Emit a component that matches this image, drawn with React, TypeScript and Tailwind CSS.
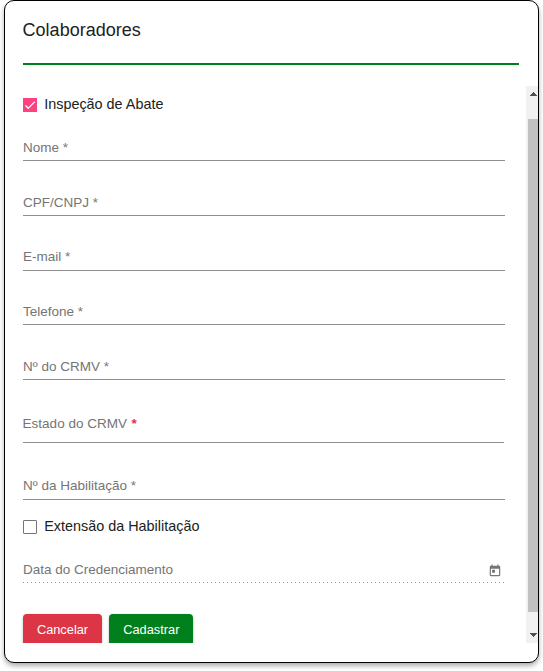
import { useState } from 'react'

interface Field {
  id: string
  label: string
  className: string
}

const fields: Field[] = [
  { id: 'nome', label: 'Nome *', className: 'h-[45px] pb-0.5' },
  { id: 'documento', label: 'CPF/CNPJ *', className: 'h-[55px] pb-0.5' },
  { id: 'email', label: 'E-mail *', className: 'h-[55px] pb-[3px]' },
  { id: 'telefone', label: 'Telefone *', className: 'h-[54px] pb-0.5' },
  { id: 'crmv', label: 'Nº do CRMV *', className: 'h-[55px] pb-0.5' },
]

function TextField({ field }: { field: Field }) {
  return (
    <div className={`flex items-end border-b border-[#8f8f8f] ${field.className}`}>
      <label className="text-[13.5px] leading-5 text-[#757575]">{field.label}</label>
    </div>
  )
}

interface CheckboxProps {
  label: string
  checked: boolean
  onChange: () => void
}

function Checkbox({ label, checked, onChange }: CheckboxProps) {
  return (
    <button type="button" role="checkbox" aria-checked={checked} onClick={onChange} className="flex h-5 items-center gap-[7.2px]">
      {checked ? (
        <span className="mt-0.5 block size-3.5 bg-[#ff4081]">
          <svg viewBox="0 0 24 24" className="size-3.5" fill="none" stroke="#fff" strokeWidth="2.1">
            <path d="M4.1 12.7 9 17.6 20.3 6.3" />
          </svg>
        </span>
      ) : (
        <span className="mt-0.5 block size-3.5 rounded-[1px] border border-[#757575]" />
      )}
      <span className="text-[14.4px] leading-5 text-[#212121]">{label}</span>
    </button>
  )
}

export default function App() {
  const [inspecao, setInspecao] = useState(true)
  const [extensao, setExtensao] = useState(false)

  return (
    <div className="h-[671px] w-[543px] bg-white pl-1 font-['Liberation_Sans',Arial,sans-serif]">
      <div className="flex h-[663px] w-[535px] flex-col overflow-hidden rounded-[10px] border border-black bg-white shadow-[0_3px_5px_rgba(0,0,0,0.32)]">
        {/* Header */}
        <div className="ml-[18px] mr-[19px] h-16 border-b-2 border-[#00801c] pt-[17px]">
          <h1 className="-ml-[0.4px] text-lg leading-6 text-[#212121]">Colaboradores</h1>
        </div>

        <div className="mt-[21px] flex h-[557px] overflow-hidden">
          {/* Form */}
          <form className="ml-[18px] mr-[21px] w-[482px] shrink-0 pt-2">
            <Checkbox label="Inspeção de Abate" checked={inspecao} onChange={() => setInspecao(!inspecao)} />
            <div className="h-0.5" />
            {fields.map(field => (
              <TextField key={field.id} field={field} />
            ))}

            {/* Estado */}
            <div className="mr-px flex h-[63px] items-end border-b border-[#8f8f8f] pb-2">
              <label className="-ml-[0.4px] text-[13.5px] leading-5 text-[#757575]">
                Estado do CRMV <span className="ml-[0.8px] font-bold text-[#dc3545]">*</span>
              </label>
            </div>

            <TextField field={{ id: 'habilitacao', label: 'Nº da Habilitação *', className: 'h-[57px] pb-[3px]' }} />

            <div className="mt-4">
              <Checkbox label="Extensão da Habilitação" checked={extensao} onChange={() => setExtensao(!extensao)} />
            </div>

            {/* Data */}
            <div className="mt-6 flex h-[22px] justify-between">
              <label className="text-[13.5px] leading-5 text-[#757575]">Data do Credenciamento</label>
              <svg viewBox="0 0 24 24" fill="#757575" className="mr-[3.5px] mt-1 size-3.5">
                <path d="M19 3h-1V1h-2v2H8V1H6v2H5c-1.11 0-1.99.9-1.99 2L3 19c0 1.1.89 2 2 2h14c1.1 0 2-.9 2-2V5c0-1.1-.9-2-2-2zm0 16H5V8h14v11zM7 10h5v5H7z" />
              </svg>
            </div>
            <div className="h-px bg-[linear-gradient(to_right,rgba(0,0,0,0.42)_0%,rgba(0,0,0,0.42)_33%,transparent_33%)] bg-[length:4px_100%] bg-repeat-x" />

            <div className="mt-[31px] flex gap-[7px] text-[12.8px] leading-8 text-white">
              <button type="button" className="h-8 w-[79px] rounded-[4px] bg-[#dc3545] shadow-[0_1px_3px_rgba(0,0,0,0.25)]">
                Cancelar
              </button>
              <button type="button" className="h-8 w-[84px] rounded-[4px] bg-[#00801c] pl-[0.6px] shadow-[0_1px_3px_rgba(0,0,0,0.25)]">
                Cadastrar
              </button>
            </div>
          </form>

          {/* Scrollbar */}
          <div className="flex w-3 shrink-0 flex-col bg-[#f1f1f1]">
            <svg viewBox="0 0 12 33" className="h-[33px] w-3" fill="#505050" shapeRendering="crispEdges">
              <path d="M4 10h7V9h-1V8H9V7H8V6H7v1H6v1H5v1H4z" />
            </svg>
            <div className="ml-0.5 h-[493px] bg-[#c1c1c1]" />
            <svg viewBox="0 0 12 31" className="h-[31px] w-3" fill="#505050" shapeRendering="crispEdges">
              <path d="M4 21h7v1h-1v1H9v1H8v1H7v-1H6v-1H5v-1H4z" />
            </svg>
          </div>
        </div>
      </div>
    </div>
  )
}
